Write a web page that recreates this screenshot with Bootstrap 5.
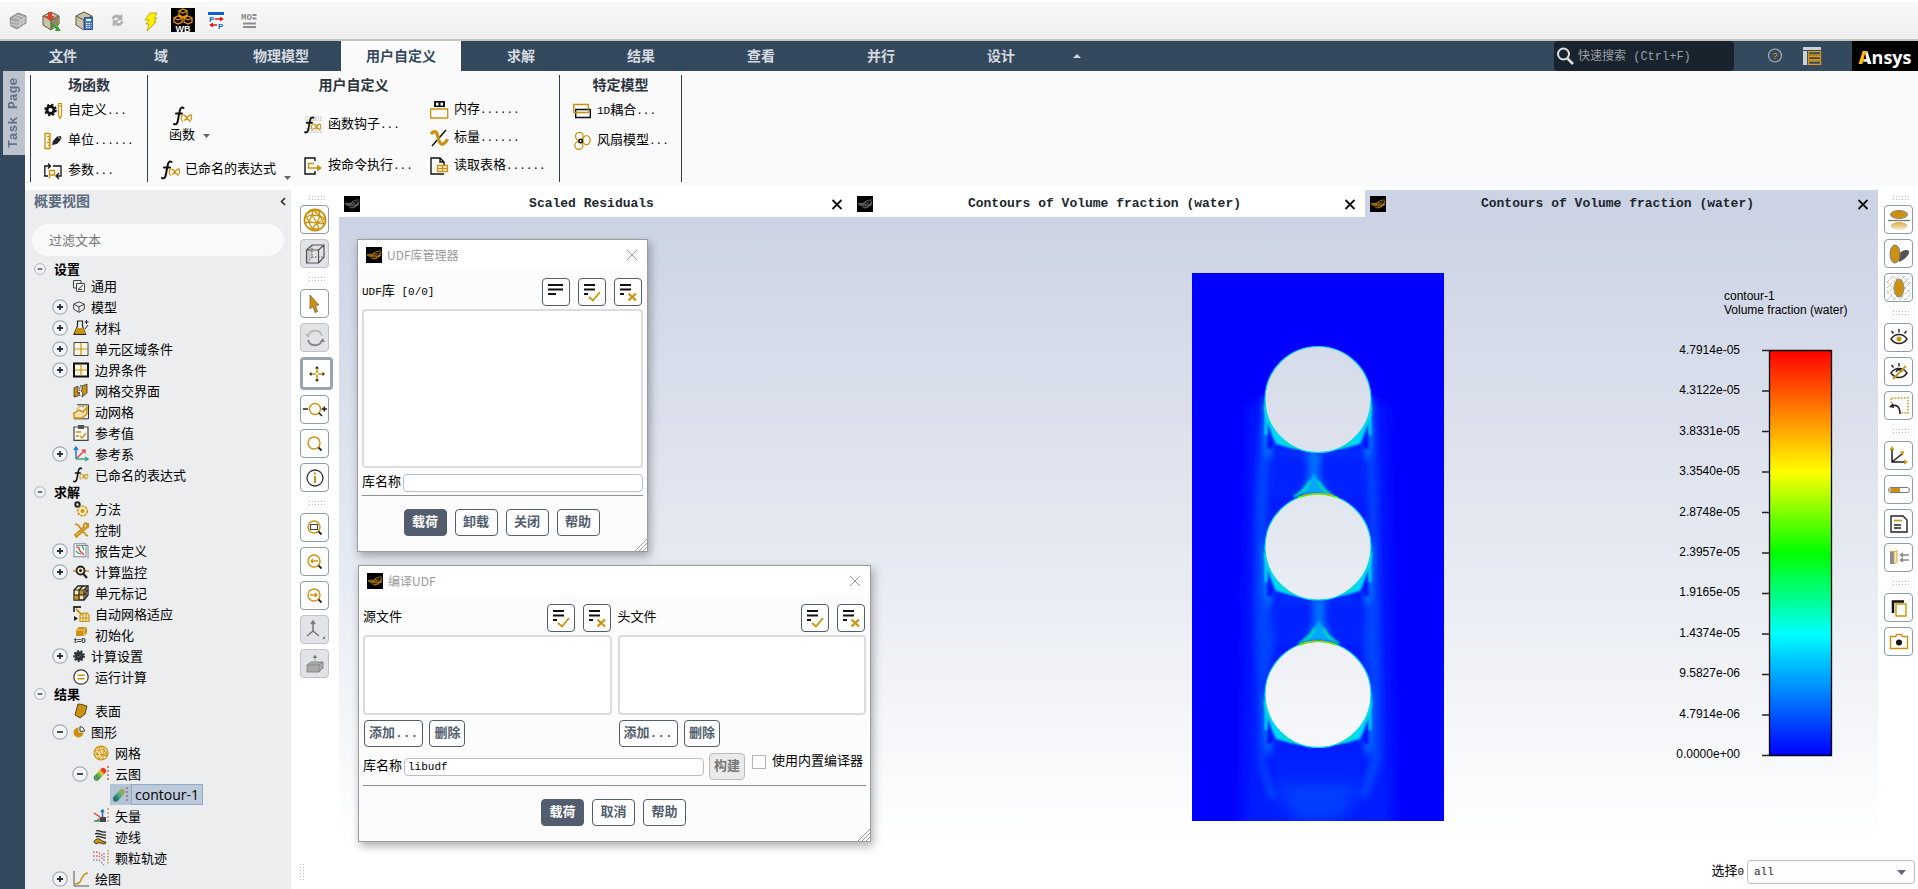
<!DOCTYPE html>
<html lang="zh-CN">
<head>
<meta charset="utf-8">
<meta name="viewport" content="width=device-width, initial-scale=1">
<title>Ansys Fluent</title>
<link href="https://cdn.jsdelivr.net/npm/bootstrap@5.3.0/dist/css/bootstrap.min.css" rel="stylesheet">
<script src="https://cdn.jsdelivr.net/npm/bootstrap@5.3.0/dist/js/bootstrap.bundle.min.js" defer></script>
<style>
:root{--navy:#34495e;--gold:#cc920f;--ink:#101418;--slate:#525e6e}
body{font-family:"Liberation Mono","Noto Sans CJK SC",monospace;font-size:13px;line-height:20px;color:#000;background:#fff;height:100vh;overflow:hidden}
svg{display:block;flex:none;overflow:visible}
a{color:inherit;text-decoration:none}
button{padding:0;border:0;background:none;color:inherit;line-height:20px}
.mn{font-size:11px}
.i12{width:12px;height:12px}.i16{width:16px;height:16px}.i18{width:18px;height:18px}.i20{width:20px;height:20px}.i24{width:24px;height:24px}
.fit-w{min-width:0}.fit-h{min-height:0}
.amber{color:var(--gold)}.dim{color:#777}

.quickbar{height:41px;padding:1px 6px 0;gap:10px;background:linear-gradient(#fff 2px,#f9f9f9 2px,#eee);border-bottom:2px solid #c4c6be}
.quickbar button{width:23px}
.menubar{height:30px;padding-left:25px;background:var(--navy);color:#d5dae0;font-size:14px;font-weight:700}
.menubar .tab{width:120px;text-align:center;height:30px;line-height:32px}
.menubar .first{width:76px}
.menubar .active{background:#fafafa;color:var(--navy)}
.searchbox{width:180px;height:30px;background:#19232d;border-radius:4px;padding-left:2px;margin-right:33px}
.searchbox input{background:none;border:0;outline:0;width:150px;font-size:12px;padding:2px 0 0;color:#ccc}
.searchbox input::placeholder{color:#98a0a8;opacity:1}
.brand{width:66px;height:30px;margin-left:31px;background:#000;font:700 18px/32px "Open Sans",sans-serif;color:#fff;text-align:center}
.brand b{background:linear-gradient(105deg,#ffb71b 52%,#fff 52%);-webkit-background-clip:text;background-clip:text;color:transparent}
.gap20{margin-left:20px}

.rail{width:25px;background:var(--navy);padding-left:3px}
.rail button{width:22px;height:84px;background:#bcc3cc;color:#5f6f86;font-weight:700;writing-mode:vertical-rl;transform:rotate(180deg);text-align:center;line-height:22px}
.ribbon{height:115px;background:#fafafa;padding:4px 0 0 5px}
.ribbon .rule{width:1px;height:107px;background:#2c3e50}
.ribbon h2{font-size:14px;line-height:22px;height:21px;margin:0;font-weight:700;text-align:center;color:#2c3440}
.ribbon button{display:flex;align-items:center;gap:6px;white-space:nowrap}
.g1{width:116px}.g2{width:411px}.g3{width:121px}
.inset{padding-left:13px}
.r30 button{height:30px}.r28 button{height:28px}
.colA{width:143px}.colB{width:126px}
.ribbon .hooks{height:58px}.ribbon .exec{height:24px}.ribbon .expr{height:33px;gap:4px}
.ribbon .func{height:57px;padding-top:10px;gap:0}

.outline{width:266px;background:#ecedef;font-family:"Open Sans","Noto Sans CJK SC",sans-serif}
.outline h1{font-size:14px;line-height:22px;margin:0;font-weight:700;color:#5c6b80}
.outline-head{padding:0 5px 0 9px}
.filter{margin:12px 7px 6px;height:32px;width:252px;border:0;border-radius:16px;background:#f9f9f9;padding:0 17px;outline:0}
.filter::placeholder{color:#777;opacity:1}
.tree{margin:0;padding:0;list-style:none}
.tree li{display:flex;align-items:center;height:21px;padding-left:27px;gap:6px}
.tree li>.tw{margin-right:-1px}
.tree .hd{height:13px;padding-left:9px;gap:8px;font-weight:700}
.tree .l2{padding-left:47px}.tree .l3{padding-left:85px}
.tree .tw{width:16px;height:16px}
.picked{background:#b4c3d5;height:21px;padding-left:2px;gap:3px}
.picked a{border:1px solid #93a8c2;padding:0 3px;line-height:19px;font-size:14px;background:#bccadb}

.tools{width:48px;padding:3px 0 0 9px;gap:5px}
.tools-r{width:40px;padding-left:6px}
.tools button{width:29px;height:29px;border:1px solid #8d9cab;border-radius:4px;background:#fff;display:flex;align-items:center;justify-content:center}
.tools button:disabled{background:#e2e3e6;border-color:#bfc2c6}
.tools .on{width:33px;height:33px;border:3px solid #97a4b1}
.grip{width:17px;height:5px;margin:3px 0 3px 8px;background:radial-gradient(circle,#bbb 1px,transparent 1px) 0 0/3px 3px}
.tools .grip:first-child{margin:2px 0 0 8px}
.grip-v{width:6px;height:18px;background:radial-gradient(circle,#bbb 1px,transparent 1px) 0 0/3px 3px}
.views a{height:27px;flex:1 1 0;display:flex;align-items:center;padding:0 9px 0 5px;font-weight:700;color:#20262e;background:#fff}
.views span{flex:1;text-align:center;padding-right:8px}
.views .active{background:#ccd3e4}
.scene{background:linear-gradient(#ccd3e4,#e5e9f1 52%,#fff 98%)}
.plot{padding:56px 0 0;margin-right:27px}
.field{width:253px;height:548px;margin-right:279px}
.legend{width:127px;font:12px/14px "Liberation Sans",sans-serif;padding-top:16px}
.legend p{margin:0;white-space:nowrap}
.colormap{margin:26px 0 0 -50px}
.legend ol{list-style:none;margin:0;padding:0;height:418px;width:66px;text-align:right}
.ramp{margin:7px 0 0 22px}
.win{position:absolute;background:#fcfcfc;border:1px solid #9b9b9f;box-shadow:2px 4px 9px rgba(0,0,0,.32)}
.udflib{left:18px;top:22px;width:291px}
.udfbuild{left:19px;top:348px;width:513px}
.win header{height:29px;background:#fff;padding:0 9px 0 8px;gap:5px;font:12px/28px "Noto Sans CJK SC",sans-serif;color:#999}
.win .body{padding:9px 4px 0}
.picks{gap:8px;padding-right:1px;margin-bottom:3px}
.win .lst{width:100%;border:2px solid #dcdcdc;border-radius:4px;background:#fff;display:block;overflow:hidden;padding:0}
.lst.tall{height:159px}.lst.short{height:80px}
.win .sq{width:28px;height:28px;border:1px solid var(--slate);border-radius:4px;background:#fff;display:flex;align-items:center;justify-content:center}
.win .txt{height:18px;border:1px solid #b3bfcc;border-radius:4px;padding:0 3px;outline:0;font-size:11px;background:#fff;min-width:0}
.pair{gap:6px}
.edit{padding:5px 1px 6px}
.named{gap:2px;margin:5px 0 2px}
.build{gap:2px;margin-bottom:5px;padding-right:3px}
.build .cmd{margin:0 5px 0 3px}
.build .opt{gap:6px;height:18px}
.foot{padding:13px 2px 15px 0;gap:8px}
.cmd{height:27px;min-width:43px;border:1px solid var(--slate)!important;border-radius:4px;background:#fff!important;color:var(--slate);font-weight:700;padding:0 4px;line-height:25px}
.cmd.prime{background:var(--slate)!important;color:#fff}
.cmd.slim{min-width:36px}
.cmd:disabled{background:#eaeaea!important;border-color:#bbb!important;color:#777}
.win hr{margin:0;border:0;height:1px;background:#8e8e8e;opacity:1}
.corner{position:absolute;right:0;bottom:0}
.boxed{width:14px;height:14px;margin:0;appearance:none;border:1px solid #b5b5b5;background:#fff}
.status{height:34px;padding:0 3px 0 8px;gap:3px}
.status select{width:168px;height:24px;border:1px solid #b3bcc8;border-radius:4px;padding:0 6px;font-size:11px;line-height:20px;background-color:#fdfdfd;background-size:9px 5px;background-position:right 8px center;background-image:url("data:image/svg+xml,%3Csvg xmlns='http://www.w3.org/2000/svg' viewBox='0 0 9 5'%3E%3Cpath fill='%23667' d='M0 0h9L4.500 5z'/%3E%3C/svg%3E")}
</style>
</head>
<body class="d-flex flex-column">

<svg width="0" height="0" class="position-absolute" aria-hidden="true">
<defs>
<linearGradient id="rain" x1="0" y1="1" x2="1" y2="0"><stop offset=".1" stop-color="#3a6"/><stop offset=".4" stop-color="#7b3"/><stop offset=".7" stop-color="#ec2"/><stop offset="1" stop-color="#e32"/></linearGradient>
<linearGradient id="rain2" x1="0" y1="1" x2="1" y2="0"><stop offset=".1" stop-color="#287"/><stop offset=".5" stop-color="#4a7"/><stop offset=".9" stop-color="#9a6"/></linearGradient>
<linearGradient id="fade" x1="0" y1="0" x2="0" y2="1"><stop offset="0" stop-color="#d9ac45"/><stop offset="1" stop-color="#f6ead0"/></linearGradient>
<linearGradient id="heat" x1="0" y1="0" x2="0" y2="1"><stop offset="0" stop-color="red"/><stop offset=".3" stop-color="#ff0"/><stop offset=".5" stop-color="#0f0"/><stop offset=".7" stop-color="#0ff"/><stop offset="1" stop-color="#00f"/></linearGradient>
<filter id="b1" x="-50%" y="-50%" width="200%" height="200%"><feGaussianBlur stdDeviation="1"/></filter>
<filter id="b3" x="-100%" y="-20%" width="300%" height="140%"><feGaussianBlur stdDeviation="3"/></filter>
<filter id="b6" x="-100%" y="-30%" width="300%" height="160%"><feGaussianBlur stdDeviation="7"/></filter>
</defs>
<symbol id="mark" viewBox="0 0 16 16"><path fill="#000" d="M0 0h16v16H0z"/><g fill="none" stroke="currentColor" stroke-width=".8"><path d="M1 7.500c3 1 5 0 7-1.500s4-2 7-2M1 8c3 2 6 0 8-1.500M3 9.500c4 1 7-1 9-4M5 11c4 1 8-1 9-5M7 12c4 0 7-2 8-7M3 7c3 1 9 4 11 2M8 5.500c2 2 4 4 7 3"/></g></symbol>
<symbol id="minus" viewBox="0 0 16 16"><circle cx="8" cy="8" r="7.200" fill="#f3f4f5" stroke="#a2adb8" stroke-width="1.200"/><path stroke="#222" stroke-width="1.600" d="M5 8h6"/></symbol>
<symbol id="plus" viewBox="0 0 16 16"><circle cx="8" cy="8" r="7.200" fill="#f3f4f5" stroke="#a2adb8" stroke-width="1.200"/><path stroke="#26323e" stroke-width="1.800" d="M5 8h6M8 5v6"/></symbol>
<symbol id="fx" viewBox="0 0 20 20"><g fill="none" stroke-linecap="round"><path stroke="#111" stroke-width="2" d="M10.500 2c-2-1.500-3.500.5-4 4L5 14c-.5 3.500-2 5-4 4M3 7.500h6"/><path stroke="var(--gold)" stroke-width="1.200" d="M10 8.500c-2 2-2 5-.5 7M17.500 8.500c1.800 2 1.500 5-.8 7"/><path stroke="var(--gold)" stroke-width="1.600" d="M11.500 9.500c2-.5 2 5 4.500 4.500M16.500 9.500c-2 0-3 5-5 4.500"/></g></symbol>
<symbol id="fan" viewBox="0 0 20 20"><g fill="none" stroke="var(--gold)" stroke-width="1.400"><ellipse cx="7" cy="4.800" rx="4.200" ry="4.500"/><ellipse cx="15" cy="9" rx="4" ry="5"/><ellipse cx="6.500" cy="15" rx="4.500" ry="4.300"/></g><circle cx="8.500" cy="10" r="2.800" fill="#111"/><circle cx="8.500" cy="10" r="1" fill="#fff"/></symbol>
<symbol id="ball" viewBox="0 0 24 24"><g fill="none" stroke="var(--gold)" stroke-width="1.300"><circle cx="12" cy="12" r="10.500" stroke-width="1.800"/><path d="M2 9l7-2 8 1 5 3M9 7l-3 7 8 1 3-7 4 8-7-1-5 6-3-7-4 1M9 7l5 8 7 1M9 7l1-5 7 6-1-5M6 14L3 8M14 15l2 6M9 21l7 0M22 11l-8 4M4 6l6-4 6 1"/></g></symbol>
<symbol id="lens" viewBox="0 0 20 20"><circle cx="9" cy="9" r="6" fill="none" stroke="var(--gold)" stroke-width="1.400"/><path stroke="#222" stroke-width="1.800" d="M13.500 13.500l3 3"/></symbol>
<symbol id="lines3" viewBox="0 0 20 20"><path stroke="#111" stroke-width="1.800" d="M2 3h15M2 7.500h15M2 12h8"/></symbol>
<symbol id="linesok" viewBox="0 0 20 20"><path stroke="#111" stroke-width="1.800" d="M2 3h11M2 7.500h11M2 12h4"/><path fill="none" stroke="var(--gold)" stroke-width="1.800" d="M7 15l4 3.500L18 10"/></symbol>
<symbol id="linesno" viewBox="0 0 20 20"><path stroke="#111" stroke-width="1.800" d="M2 3h11M2 7.500h11M2 12h4"/><path stroke="var(--gold)" stroke-width="2.200" d="M10.500 11.500l7.500 7M18 11.500l-7.500 7"/></symbol>
<symbol id="cross" viewBox="0 0 12 12"><path stroke="currentColor" d="M1 1l10 10M11 1L1 11"/></symbol>
<symbol id="cross2" viewBox="0 0 12 12"><path stroke="#111" stroke-width="1.800" d="M1.500 2l9 9M10.500 2l-9 9"/></symbol>
<symbol id="rocks" viewBox="0 0 24 24"><path fill="#c9c4b0" stroke="#5c5738" d="M4 8l8-4 8 4v8l-8 6-8-5z"/><path fill="#8f8a68" d="M12 12l8-4v8l-8 6z"/><path fill="none" stroke="#5c5738" d="M4 8l8 4 8-4M12 12v10"/></symbol>
</svg>

<div class="quickbar d-flex align-items-center" role="toolbar">
<button aria-label="几何"><svg class="i24" viewBox="0 0 24 24"><path fill="#a9a9a9" stroke="#888" d="M4 10l8-5 8 3v7l-9 6-6-3z"/><path fill="none" stroke="#dcdcdc" stroke-width=".8" d="M5 13l6 2 9-5M5 16l6 2 9-5M8 9l6 2v8M11 7l6 2v8"/></svg></button>
<button aria-label="读取"><svg class="i24" viewBox="0 0 24 24"><use href="#rocks" width="24" height="24"/><path fill="#d8432b" d="M9 4h4v4h3l-5 5-5-5h3z"/><path fill="#3aa02c" d="M13 15l5 4v-2l4 6h-6l1-2-5-4z"/></svg></button>
<button aria-label="计算器"><svg class="i24" viewBox="0 0 24 24"><use href="#rocks" width="24" height="24"/><path fill="#4a7ac4" stroke="#264f94" d="M12.500 9.500h8v12h-8z"/><path fill="#dfe" d="M14 11h5v2h-5z"/><path stroke="#fff" stroke-dasharray="1.500 1" d="M14 15.500h5.500M14 17.500h5.500M14 19.500h5.500"/></svg></button>
<button aria-label="刷新"><svg class="i24" viewBox="0 0 24 24"><path fill="#b0b0b0" stroke="#a0a0a0" stroke-width=".5" d="M7 11c0-4 6-5 8-3l2-1.500V12h-5l1.500-2c-2-1.500-4-1-4.500 1zM18 13.500c0 4-6 5-8 3L8 18v-5.500h5L11.500 14.500c2 1.500 4 1 4.500-1z"/></svg></button>
<button aria-label="运行"><svg class="i24" viewBox="0 0 24 24"><path fill="#fff200" stroke="#b79b00" stroke-width=".8" d="M12 5h7l-3 5h3l-3 4h2l-9 9 2-7H8l3-4H7z"/></svg></button>
<button aria-label="Workbench"><svg class="i24" viewBox="0 0 24 24"><path d="M0 0h24v24H0z"/><g fill="none" stroke="#e8940e" stroke-width="1.300"><path d="M12 1l4 2v4l-4 2-4-2V3zM7 8l4 2v4l-4 2-4-2v-4zM17 8l4 2v4l-4 2-4-2v-4zM8 3l4 2 4-2M3 10l4 2 4-2M13 10l4 2 4-2"/></g><text x="12" y="23.500" text-anchor="middle" font-family="Liberation Sans" font-weight="700" font-size="9" fill="#fff">WB</text></svg></button>
<button aria-label="参数"><svg class="i24" viewBox="0 0 24 24"><path fill="#fff" d="M4 4h16v17H4z"/><path fill="#0a62d0" d="M4 4h16v3H4z"/><path stroke="#e11" stroke-width="1.400" d="M11 11h6M8 17h5"/><path fill="#e11" d="M16 8.500l4 2.500-4 2.500zM9 14.500L5 17l4 2.500z"/><text x="5" y="14" font-family="Liberation Sans" font-weight="700" font-size="8" fill="#0a62d0">P</text><text x="14" y="20.500" font-family="Liberation Sans" font-weight="700" font-size="8" fill="#0a62d0">P</text></svg></button>
<button aria-label="监控"><svg class="i24" viewBox="0 0 24 24"><path stroke="#8c8c8c" stroke-width="2" d="M6 15.500h13M6 19h13M15.500 7h4M15.500 10.500h4"/><text x="4" y="12" font-family="Liberation Mono" font-weight="700" font-size="9" fill="#8c8c8c">MO</text></svg></button>
</div>

<nav class="menubar d-flex align-items-center">
<a href="#" class="tab first"><u>文</u>件</a><a href="#" class="tab">域</a><a href="#" class="tab">物理模型</a><a href="#" class="tab active">用户自定义</a><a href="#" class="tab">求解</a><a href="#" class="tab">结果</a><a href="#" class="tab">查看</a><a href="#" class="tab">并行</a><a href="#" class="tab">设计</a>
<button class="ms-2 ps-1" aria-label="折叠"><svg width="8" height="4"><path fill="#d5dae0" d="M4 0l4 4H0z"/></svg></button>
<label class="searchbox d-flex align-items-center gap-1 ms-auto"><svg class="i18" viewBox="0 0 18 18"><circle cx="7.500" cy="7" r="5.500" fill="none" stroke="#dde1e6" stroke-width="2"/><path stroke="#dde1e6" stroke-width="2.500" d="M11.500 11.500l5.500 5.500"/></svg><input placeholder="快速搜索 (Ctrl+F)" aria-label="快速搜索"></label>
<button aria-label="帮助"><svg class="i16" viewBox="0 0 16 16"><circle cx="8" cy="7.500" r="6.500" fill="none" stroke="#a9b2bc" stroke-width="1.200"/><text x="8" y="11" text-anchor="middle" font-size="9" fill="#e09a15">?</text></svg></button>
<button class="gap20" aria-label="布局"><svg class="i18" viewBox="0 0 18 18"><path fill="#ccd2d9" d="M0 0h18v3H0zM0 4h4v14H0z"/><path fill="none" stroke="#e09a15" stroke-width="1.300" d="M5.500 4.700H17.500v3.200H5.500zM5.500 9.500H17.500v3.200H5.500zM5.500 14.200H17.500v3.200H5.500z"/></svg></button>
<span class="brand"><b>A</b>nsys</span>
</nav>

<div class="d-flex flex-grow-1 fit-h">
<div class="rail"><button>Task Page</button></div>
<div class="d-flex flex-column flex-grow-1 fit-w">

<section class="ribbon d-flex">
<div class="rule"></div>
<div class="g1 r30"><h2>场函数</h2><div class="inset">
<button><svg class="i18" viewBox="0 0 18 18"><circle cx="6.500" cy="8" r="3.500" fill="none" stroke="#111" stroke-width="2.800"/><circle cx="6.500" cy="8" r="5.400" fill="none" stroke="#111" stroke-width="1.800" stroke-dasharray="2.240 2"/><path fill="none" stroke="var(--gold)" stroke-width="1.200" d="M14.500 1.500h3v12l-1.500 3-1.500-3zM14.500 4h3"/></svg><span>自定义<span class="mn">...</span></span></button>
<button><svg class="i18" viewBox="0 0 18 18"><path fill="none" stroke="var(--gold)" stroke-width="1.400" d="M1 1.500h5v15H1zM3 4.500h3M4 7.500h2M3 10.500h3M4 13.500h2"/><path fill="#222" d="M8 13l1-4 4-4.500L17 4l.5 3-4.500 5z"/><path stroke="#fff" stroke-width=".8" d="M14 4.500l3 3"/></svg><span>单位<span class="mn">......</span></span></button>
<button><svg class="i18" viewBox="0 0 18 18"><path fill="none" stroke="#111" stroke-width="1.300" d="M4 14H.8V4H6M4 1.500L6.500 4 4 6.500M9 4h8v10h-4M15 11l-3 3 3 3"/><path fill="none" stroke="var(--gold)" stroke-width="1.400" d="M5.500 16.500v-8h5v4.500h-5"/></svg><span>参数<span class="mn">...</span></span></button>
</div></div>
<div class="rule"></div>
<div class="g2"><h2>用户自定义</h2><div class="d-flex inset">
<div class="colA">
<button class="func flex-column align-items-start ps-2"><svg class="i20 ms-1"><use href="#fx"/></svg><span class="d-flex align-items-center pe-1 gap-2">函数<svg width="7" height="4"><path fill="#666" d="M0 0h7L3.500 4z"/></svg></span></button>
<button class="expr"><svg class="i20"><use href="#fx"/></svg>已命名的表达式<svg class="ms-1 mt-3" width="7" height="4"><path fill="#666" d="M0 0h7L3.500 4z"/></svg></button>
</div>
<div class="colB">
<button class="hooks"><svg class="i18" viewBox="0 0 20 20"><text font-size="7" fill="#bbb" font-family="Liberation Sans"><tspan x="1" y="6">01001</tspan><tspan x="1" y="19">10101</tspan></text><use href="#fx" width="20" height="20"/></svg><span>函数钩子<span class="mn">...</span></span></button>
<button class="exec"><svg class="i18" viewBox="0 0 18 18"><path fill="none" stroke="#111" stroke-width="1.400" d="M11 4V1H1v16h10v-3"/><path fill="none" stroke="var(--gold)" stroke-width="1.400" d="M10 6.500H4.500V11H14"/><path fill="var(--gold)" d="M13 7.500l5 3.500-5 3.500z"/></svg><span>按命令执行<span class="mn">...</span></span></button>
</div>
<div class="r28">
<button><svg class="i18" viewBox="0 0 18 18"><path fill="#111" d="M4 0h11v6H4z"/><path fill="#fff" d="M6 1.800h2.500v2.700H6zM10.500 1.800H13v2.700h-2.500z"/><path fill="none" stroke="var(--gold)" stroke-width="1.300" d="M.7 8h17v9H.7z"/></svg><span>内存<span class="mn">......</span></span></button>
<button><svg class="i18" viewBox="0 0 18 18"><path stroke="#111" stroke-width="1.500" d="M16 1L2 17"/><path fill="none" stroke="var(--gold)" stroke-width="3.200" d="M1 5c3-4 6-3 7 3s3 8 5 7 4-3 4-5"/></svg><span>标量<span class="mn">......</span></span></button>
<button><svg class="i18" viewBox="0 0 18 18"><path fill="none" stroke="#111" stroke-width="1.400" d="M14 8V5l-4-4H1v16h13M10 1v4h4"/><path fill="#fafafa" stroke="var(--gold)" stroke-width="1.300" d="M7.500 8.500h10v6h-10zM7.500 11.500h10M12.500 8.500v6"/></svg><span>读取表格<span class="mn">......</span></span></button>
</div></div></div>
<div class="rule"></div>
<div class="g3 r30"><h2>特定模型</h2><div class="inset">
<button><svg class="i18" viewBox="0 0 18 18"><path fill="none" stroke="#111" stroke-width="1.400" d="M2.700 7.500H17.300v8H2.700z"/><path fill="none" stroke="var(--gold)" stroke-width="1.400" d="M15.300 7.500v-5H.7v8h14.600v-1.500"/></svg><span><span class="mn">1D</span>耦合<span class="mn">...</span></span></button>
<button><svg class="i18"><use href="#fan"/></svg><span>风扇模型<span class="mn">...</span></span></button>
</div></div>
<div class="rule"></div>
</section>

<div class="d-flex flex-grow-1 fit-h pt-1">
<aside class="outline">
<div class="outline-head d-flex align-items-center justify-content-between"><h1>概要视图</h1><button aria-label="收起"><svg width="6" height="9"><path fill="none" stroke="#222" stroke-width="1.500" d="M5 1L1.500 4.500 5 8"/></svg></button></div>
<input class="filter" placeholder="过滤文本" aria-label="过滤文本">
<ul class="tree">
<li class="hd"><svg class="i12"><use href="#minus"/></svg><a href="#">设置</a></li>
<li><span class="tw"></span><svg class="i12" viewBox="0 0 12 12"><path fill="none" stroke="#444" d="M8 3V.5H.5V8H3M3.500 3.500h8v8h-8zM10 5L5 9.500h4"/></svg><a href="#">通用</a></li>
<li><button class="tw" aria-label="展开"><svg class="i16"><use href="#plus"/></svg></button><svg class="i12" viewBox="0 0 12 12"><path fill="none" stroke="#444" d="M6 .8l5.300 2.400v5L6 11.300.7 8.200v-5zM.7 3.200L6 5.800l5.300-2.600M6 5.800v5.500"/></svg><a href="#">模型</a></li>
<li><button class="tw" aria-label="展开"><svg class="i16"><use href="#plus"/></svg></button><svg class="i16" viewBox="0 0 16 16"><path fill="#eee" stroke="#222" stroke-width="1.200" d="M4.500 1h5v5l3 8.500H1L4.500 6z"/><path fill="var(--gold)" d="M3.500 8h7l2 6H1.500z"/><path stroke="#222" d="M12 9l3-4M13.500 0v4M11.500 2h4"/></svg><a href="#">材料</a></li>
<li><button class="tw" aria-label="展开"><svg class="i16"><use href="#plus"/></svg></button><svg class="i16" viewBox="0 0 16 16"><path fill="#fbf5e6" stroke="#444" d="M1 1.500h14v13H1z"/><path stroke="var(--gold)" stroke-width="1.200" d="M1.500 8h13M8 2v12"/></svg><a href="#">单元区域条件</a></li>
<li><button class="tw" aria-label="展开"><svg class="i16"><use href="#plus"/></svg></button><svg class="i16" viewBox="0 0 16 16"><path fill="#fbf5e6" stroke="#111" stroke-width="2" d="M1 1.500h14v13H1z"/><path stroke="var(--gold)" stroke-width="1.200" d="M2 8h12M8 2.500v11"/></svg><a href="#">边界条件</a></li>
<li><span class="tw"></span><svg class="i16" viewBox="0 0 16 16"><path fill="var(--gold)" stroke="#333" stroke-width=".8" d="M1 5l4-2v3l-1 3 2 1-1 3-4 1zM9 3l5-2v9l-5 4 1-4-2-2 1-2z"/><path fill="none" stroke="#222" stroke-dasharray="1.500 1" d="M8 2L6 7l1 7"/></svg><a href="#">网格交界面</a></li>
<li><span class="tw"></span><svg class="i16" viewBox="0 0 16 16"><path fill="none" stroke="#333" d="M4 .8h11.500v14H1"/><path fill="#f5dfae" stroke="var(--gold)" stroke-width="1.400" d="M1 9c2 0 3-3 5-3l4 2 4-5v7l-5 4H1z"/><path fill="none" stroke="var(--gold)" d="M4 5c2-3 5-3 7-2l-1-2"/></svg><a href="#">动网格</a></li>
<li><span class="tw"></span><svg class="i16" viewBox="0 0 16 16"><path fill="#f7f7f7" stroke="#444" stroke-width="1.200" d="M1 2h14v13.300H1z"/><path fill="#555" d="M5 0h6v4H5z"/><path fill="none" stroke="var(--gold)" stroke-width="1.400" d="M3 7h5M3 11h3M7 11l2 2 4-5"/></svg><a href="#">参考值</a></li>
<li><button class="tw" aria-label="展开"><svg class="i16"><use href="#plus"/></svg></button><svg class="i16" viewBox="0 0 16 16"><path fill="none" stroke="#2a7fc0" stroke-width="1.500" d="M3 13V2M1 4l2-3 2 3"/><path fill="none" stroke="#e33" stroke-width="1.200" d="M4 12l8-8M8.500 4H12v3.500"/><path fill="none" stroke="#3a8" stroke-width="1.500" d="M3 13h11M12 11l3 2-3 2"/></svg><a href="#">参考系</a></li>
<li><span class="tw"></span><svg class="i16"><use href="#fx"/></svg><a href="#">已命名的表达式</a></li>
<li class="hd"><svg class="i12"><use href="#minus"/></svg><a href="#">求解</a></li>
<li><span class="tw"></span><svg class="i16" viewBox="0 0 16 16"><circle cx="4.500" cy="3.500" r="2.200" fill="none" stroke="#222" stroke-width="2"/><circle cx="9.500" cy="10" r="4.800" fill="#faeccb" stroke="var(--gold)" stroke-width="1.600" stroke-dasharray="2.500 1"/><circle cx="9.500" cy="10" r="2" fill="var(--gold)"/></svg><a href="#">方法</a></li>
<li><span class="tw"></span><svg class="i16" viewBox="0 0 16 16"><path fill="none" stroke="var(--gold)" stroke-width="1.800" d="M2 2l3 1 8 10 2 1M14 1c-3 0-4 2-3 4l-9 8 1.500 2L13 6c2 0 3-2 2-4l-2 2"/></svg><a href="#">控制</a></li>
<li><button class="tw" aria-label="展开"><svg class="i16"><use href="#plus"/></svg></button><svg class="i16" viewBox="0 0 16 16"><path fill="#f5f8fa" stroke="#7a8794" d="M3 2.500h12v13M1 .8h12v13H1z"/><path fill="none" stroke="#e33" stroke-width="1.300" d="M3 4l3 1 1 3 4 4"/><path fill="none" stroke="#2a5" stroke-width="1.300" d="M3 8l2 2 3 1M9 3l2 4"/></svg><a href="#">报告定义</a></li>
<li><button class="tw" aria-label="展开"><svg class="i16"><use href="#plus"/></svg></button><svg class="i16" viewBox="0 0 16 16"><path stroke="var(--gold)" stroke-width="1.500" d="M0 7h3M12 7h4"/><circle cx="7.500" cy="6.500" r="4" fill="#f5e7c4" stroke="#222" stroke-width="1.800"/><circle cx="7.500" cy="6.500" r="1.500" fill="#222"/><path stroke="#222" stroke-width="2.200" d="M10 9.500l4 4.500"/></svg><a href="#">计算监控</a></li>
<li><span class="tw"></span><svg class="i16" viewBox="0 0 16 16"><path fill="#f4e2b8" stroke="#222" stroke-width="1.300" d="M1 5l4-4h10v9l-4 5H1z"/><path fill="var(--gold)" d="M1.500 10H6v4.500H1.500zM6 5.500h4.500V10H6z"/><path fill="none" stroke="#222" stroke-width="1.200" d="M1 5h10v10M11 5l4-4M1 10h10l4-5M6 5v10M6 5l4-4M13 3v9"/></svg><a href="#">单元标记</a></li>
<li><span class="tw"></span><svg class="i16" viewBox="0 0 16 16"><path fill="none" stroke="#333" stroke-width="1.800" d="M1 6V1h7"/><path stroke="var(--gold)" stroke-width="1.800" d="M3 3l6 6"/><path fill="#222" d="M1 10l4 2.500L1 15z"/><path fill="#fbeecb" stroke="var(--gold)" stroke-width="1.200" d="M7 9l3-2h4l2 2v6.500H7zM7 12h9M10 7v8.500M13 7v8.500"/></svg><a href="#">自动网格适应</a></li>
<li><span class="tw"></span><svg class="i16" viewBox="0 0 16 16"><path fill="var(--gold)" d="M3 3l3-3h8v6l-3 3H3z"/><path fill="none" stroke="#f4dfa8" stroke-width=".8" d="M3 3h8v6M11 3l3-3"/><text x="1" y="15.500" font-family="Liberation Sans" font-weight="700" font-size="8" fill="#333">t=0</text></svg><a href="#">初始化</a></li>
<li><button class="tw" aria-label="展开"><svg class="i16"><use href="#plus"/></svg></button><svg class="i12" viewBox="0 0 12 12"><circle cx="6" cy="6" r="4.500" fill="#2b3238"/><circle cx="6" cy="6" r="5" fill="none" stroke="#2b3238" stroke-width="1.800" stroke-dasharray="2 1.500"/><path fill="none" stroke="#6b7680" d="M4 6l1.500 1.500L8 4.500"/></svg><a href="#">计算设置</a></li>
<li><span class="tw"></span><svg class="i16" viewBox="0 0 16 16"><circle cx="8" cy="8" r="7.200" fill="#fff" stroke="#333" stroke-width="1.200"/><path stroke="var(--gold)" stroke-width="1.600" d="M4.500 6.300h7M4.500 9.700h7"/></svg><a href="#">运行计算</a></li>
<li class="hd"><svg class="i12"><use href="#minus"/></svg><a href="#">结果</a></li>
<li><span class="tw"></span><svg class="i16" viewBox="0 0 16 16"><path fill="var(--gold)" stroke="#5a4a20" d="M5 1l4 .5 5 1.500-2 8-5 4-5-3z"/></svg><a href="#">表面</a></li>
<li><button class="tw" aria-label="折叠"><svg class="i16"><use href="#minus"/></svg></button><svg class="i12" viewBox="0 0 12 12"><path fill="var(--gold)" d="M5.500 1.500v5h5a5 5 0 1 1-5-5z"/><path fill="#fff" stroke="#333" d="M7 .7v4.500h4.500A4.500 4.500 0 0 0 7 .7z"/></svg><a href="#">图形</a></li>
<li class="l2"><span class="tw"></span><svg class="i16"><circle cx="8" cy="8" r="7" fill="#f7e6bd"/><use href="#ball"/></svg><a href="#">网格</a></li>
<li class="l2"><button class="tw" aria-label="折叠"><svg class="i16"><use href="#minus"/></svg></button><svg class="i16" viewBox="0 0 16 16"><path stroke="url(#rain)" stroke-width="6" stroke-linecap="round" d="M4 11.500L10 5"/><circle cx="3.500" cy="12" r="2.500" fill="#5c9a5a" stroke="#476" stroke-width=".5"/><path stroke="#c43" stroke-width="1.300" stroke-dasharray="2 2" d="M15 0v15"/></svg><a href="#">云图</a></li>
<li class="l3"><span class="picked d-flex align-items-center"><svg class="i16" viewBox="0 0 16 16"><path stroke="url(#rain2)" stroke-width="6" stroke-linecap="round" d="M4 11.500L10 5"/><circle cx="3.500" cy="12" r="2.500" fill="#27766c"/><path stroke="#867" stroke-width="1.300" stroke-dasharray="2 2" d="M15 0v15"/></svg><a href="#">contour-1</a></span></li>
<li class="l2"><span class="tw"></span><svg class="i16" viewBox="0 0 16 16"><path fill="none" stroke="#d33" stroke-width="1.300" d="M1 5l6 4M8 10l-5 3"/><path fill="none" stroke="#2a5" stroke-width="1.500" d="M1 13h8"/><path fill="none" stroke="#27a" stroke-width="1.500" d="M9.500 12V2M8 4l1.500-2L11 4"/><path fill="#444" d="M7 9h6v5H7z"/><path stroke="#c84" stroke-width="1.300" stroke-dasharray="2 2" d="M15 0v15"/></svg><a href="#">矢量</a></li>
<li class="l2"><span class="tw"></span><svg class="i16" viewBox="0 0 16 16"><path fill="none" stroke="#222" stroke-width="1.300" d="M3 2c3-2 4 2 10 1M2 5c4-2 6 2 11 1M3 8c3-2 6 1 10 1"/><path fill="var(--gold)" stroke="#222" stroke-width=".8" d="M1 13c1-4 6-4 8-1l4 1-1 2c-4 0-6-2-7-1s-3 1-4-1z"/></svg><a href="#">迹线</a></li>
<li class="l2"><span class="tw"></span><svg class="i16" viewBox="0 0 16 16"><g fill="none" stroke-width="1.500" stroke-dasharray="1.500 1.500"><path stroke="#d66" d="M0 2h5l5 4M0 6h6l4 3"/><path stroke="#88a" d="M0 10h6l5 5M11 3v9"/><path stroke="#c84" d="M15 0v15"/></g></svg><a href="#">颗粒轨迹</a></li>
<li><button class="tw" aria-label="展开"><svg class="i16"><use href="#plus"/></svg></button><svg class="i16" viewBox="0 0 16 16"><path fill="none" stroke="#555" d="M1 0v15h15"/><path fill="none" stroke="var(--gold)" stroke-width="1.500" d="M2 13c9 0 4-10 13-11"/></svg><a href="#">绘图</a></li>
</ul>
</aside>

<div class="d-flex flex-column flex-grow-1 fit-w">
<div class="d-flex flex-grow-1 fit-h">
<div class="tools d-flex flex-column" role="toolbar">
<div class="grip"></div>
<button aria-label="网格显示"><svg class="i24"><use href="#ball"/></svg></button>
<button disabled aria-label="立方体"><svg class="i20" viewBox="0 0 20 20"><path fill="#c8c8c8" d="M1 6l6-5v12l-6 6z"/><path fill="none" stroke="#555" stroke-width="1.200" d="M1.500 6v13h12V6zM1.500 6l5.500-5h12v12l-5.500 6M13.500 6L19 1"/><path fill="none" stroke="#555" stroke-dasharray="1.500 1.500" d="M7 1v12h12M7 13l-5 6"/></svg></button>
<div class="grip"></div>
<button aria-label="选择"><svg class="i20" viewBox="0 0 20 20"><path fill="var(--gold)" stroke="#7a6a40" stroke-width=".8" d="M5 1l9 10-3.500.5 2 6-2.500 1-2-6L5 15z"/></svg></button>
<button disabled aria-label="旋转"><svg class="i20" viewBox="0 0 20 20"><path fill="none" stroke="#bbb" stroke-width="1.800" d="M3 8c2-7 12-7 14 0"/><path fill="#bbb" d="M0 6h5l-2 4z"/><path fill="none" stroke="#888" stroke-width="1.800" d="M17 12c-2 7-12 7-14 0"/><path fill="#888" d="M15 14h5l-2-4z"/></svg></button>
<button class="on" aria-label="平移"><svg class="i20" viewBox="0 0 20 20"><path stroke="var(--gold)" stroke-width="1.600" d="M10 4v5M10 11v5M4 10h5M11 10h5"/><path fill="#222" d="M8 4.500L10 2l2 2.500zM8 15.500L10 18l2-2.500zM4.500 8L2 10l2.500 2zM15.500 8L18 10l-2.500 2z"/></svg></button>
<button aria-label="缩放"><svg class="i24" viewBox="0 0 24 24"><circle cx="12" cy="11" r="5.500" fill="none" stroke="var(--gold)" stroke-width="1.400"/><path stroke="#222" stroke-width="1.600" d="M16 15l3 3M0 11h5M18.500 11H24M21.300 8.500v5"/></svg></button>
<button aria-label="放大镜"><svg class="i20"><use href="#lens"/></svg></button>
<button aria-label="信息"><svg class="i20" viewBox="0 0 20 20"><circle cx="10" cy="10" r="8" fill="none" stroke="#333" stroke-width="1.300"/><path stroke="var(--gold)" stroke-width="2" d="M10 4.500v2M10 8v7"/></svg></button>
<div class="grip"></div>
<button aria-label="适合窗口"><svg class="i20" viewBox="0 0 20 20"><use href="#lens" width="20" height="20"/><path fill="none" stroke="#444" stroke-width="1.200" d="M5.500 6.500h7v5h-7z"/></svg></button>
<button aria-label="上一视图"><svg class="i20" viewBox="0 0 20 20"><use href="#lens" width="20" height="20"/><path fill="none" stroke="var(--gold)" stroke-width="1.300" d="M13 9H6M8 7L6 9l2 2"/></svg></button>
<button aria-label="下一视图"><svg class="i20" viewBox="0 0 20 20"><use href="#lens" width="20" height="20"/><path fill="none" stroke="var(--gold)" stroke-width="1.300" d="M5 9h7M10 7l2 2-2 2"/></svg></button>
<button disabled aria-label="坐标轴"><svg class="i20" viewBox="0 0 20 20"><path fill="none" stroke="#777" stroke-width="1.500" d="M8 2v9M8 11l-6 5M8 11l6 5M6 4l2-3 2 3"/><path fill="#777" d="M20 16v3h-3z"/></svg></button>
<button disabled aria-label="投影"><svg class="i20" viewBox="0 0 20 20"><path fill="#aaa" stroke="#888" d="M2 11l4-3h12v6l-4 4H2z"/><path fill="none" stroke="#888" d="M2 11h12v7M14 11l4-3"/><path stroke="#aaa" d="M10 9V2M8 4l2-3 2 3"/></svg></button>
</div>

<main class="d-flex flex-column flex-grow-1 fit-w">
<nav class="views d-flex">
<a href="#"><svg class="i16 dim"><use href="#mark"/></svg><span>Scaled Residuals</span><svg class="i12"><use href="#cross2"/></svg></a>
<a href="#"><svg class="i16 dim"><use href="#mark"/></svg><span>Contours of Volume fraction (water)</span><svg class="i12"><use href="#cross2"/></svg></a>
<a href="#" class="active"><svg class="i16 amber"><use href="#mark"/></svg><span>Contours of Volume fraction (water)</span><svg class="i12"><use href="#cross2"/></svg></a>
</nav>
<div class="scene flex-grow-1 position-relative">
<div class="plot d-flex justify-content-end align-items-start">
<svg class="field" viewBox="0 0 253 548" role="img" aria-label="Volume fraction contour">
<defs>
<clipPath id="box"><path d="M0 0h252v548H0z"/></clipPath>
<linearGradient id="backdrop" gradientUnits="userSpaceOnUse" x1="0" y1="-56" x2="0" y2="583"><stop stop-color="#ccd3e4"/><stop offset=".52" stop-color="#e5e9f1"/><stop offset=".98" stop-color="#fff"/></linearGradient>
<g id="skirt"><path fill="#00a0ff" filter="url(#b3)" opacity=".75" d="M71 0h5l5 40-3 26-5-12zM181 0h-5l-5 40 3 26 5-12z"/>
<path fill="#00d8ff" filter="url(#b1)" d="M73 4c1 18 4 31 11 43l14 4 12 1C94 45 80 26 74 0zM179 4c-1 18-4 31-11 43l-14 4-12 1c16-7 30-26 36-52z"/>
<path fill="#0018ff" filter="url(#b1)" d="M76 28l6 18-2 6-5 0zM176 28l-6 18 2 6 5 0z"/>
<path fill="none" stroke="#00f060" stroke-width="2.400" filter="url(#b1)" d="M73 8c1 10 3 14 6 20M90 42c5 5 10 7 16 9M179 8c-1 10-3 14-6 20M162 42c-5 5-10 7-16 9"/>
<path stroke="#00e8ff" stroke-width="2.500" filter="url(#b1)" d="M74 10v28M178 10v28"/></g>
<g id="crest"><path fill="#0090ff" filter="url(#b3)" opacity=".7" d="M-6-42H6l0 22 8 20h-28l8-20z"/><path fill="#00a8ff" filter="url(#b1)" d="M0-22l5 9 12 14c-12-4-22-4-34 0L-5-13z"/><path fill="none" stroke="#00e8a0" stroke-width="2.200" filter="url(#b1)" d="M-20 2l11-8 5-8M20 2L9-6 4-14"/></g>
</defs>
<path fill="#00f" d="M0 0h252v548H0z"/>
<g clip-path="url(#box)">
<g filter="url(#b6)"><path fill="#001aff" d="M58 130h136l8 440H50z"/><path fill="#0024ff" d="M80 180h92v44H80zM82 328h88v44H82zM84 480h84v60H84z"/></g>
<g filter="url(#b3)" opacity=".8" fill="#0050ff"><path d="M70 150h8l-1 55-3 60 3 60 6 45-12 50 2 70 12 34-8 4-10-40-1-66-3-100 1-100zM182 150h-8l1 55 3 60-3 60-4 45 8 50-2 70-10 34 8 4 14-40v-66l-2-100-2-100z"/></g>
<path fill="#0050ff" opacity=".7" filter="url(#b3)" d="M86 177h80v3h-32l-8 8h-10l-8-8H86zM88 325h76v3h-30l-8 8-8-8H88z"/>
<g filter="url(#b6)" fill="#003cff"><path d="M84 510h84l-20 38h-44z"/></g>
<use href="#skirt" y="124"/><use href="#skirt" y="271"/><use href="#skirt" y="419"/>
<use href="#crest" x="122" y="222"/><use href="#crest" x="127" y="369"/>
</g>
<g fill="url(#backdrop)" stroke="#00d8f0" stroke-width="1.200"><circle cx="126" cy="126.500" r="53"/><circle cx="126" cy="274" r="53"/><circle cx="126" cy="421.500" r="53"/></g>
<path fill="none" stroke="#4f0" stroke-width="1.600" d="M106 224.500Q126 217 146 224.500M107 372Q126 364.500 145 372"/>
<path fill="none" stroke="#f90" stroke-width="1.200" stroke-dasharray="5 3" d="M111 222.500Q126 218.500 141 222.500M112 370Q126 366 140 370"/>
</svg>
<div class="legend"><p>contour-1</p><p>Volume fraction (water)</p>
<div class="colormap d-flex"><ol class="d-flex flex-column justify-content-between"><li>4.7914e-05</li><li>4.3122e-05</li><li>3.8331e-05</li><li>3.3540e-05</li><li>2.8748e-05</li><li>2.3957e-05</li><li>1.9165e-05</li><li>1.4374e-05</li><li>9.5827e-06</li><li>4.7914e-06</li><li>0.0000e+00</li></ol>
<svg class="ramp" width="70" height="406" viewBox="0 0 70 406"><path fill="url(#heat)" stroke="#000" stroke-width="1.300" d="M7.500.500h62v405h-62z"/><path stroke="#222" stroke-width="1.300" d="M0 .5h7M0 41h7M0 81.500h7M0 122h7M0 162.500h7M0 203h7M0 243.500h7M0 284h7M0 324.500h7M0 365h7M0 405.500h7"/></svg></div>
</div>
</div>

<section class="win udflib" role="dialog" aria-label="UDF库管理器">
<header class="d-flex align-items-center"><svg class="i16 amber"><use href="#mark"/></svg>UDF库管理器<button class="ms-auto" aria-label="关闭窗口"><svg class="i12"><use href="#cross"/></svg></button></header>
<div class="body">
<div class="picks d-flex align-items-center"><label for="libs" class="me-auto"><span class="mn">UDF</span>库<span class="mn"> [0/0]</span></label><button class="sq" aria-label="列表"><svg class="i20"><use href="#lines3"/></svg></button><button class="sq" aria-label="全选"><svg class="i20"><use href="#linesok"/></svg></button><button class="sq" aria-label="取消全选"><svg class="i20"><use href="#linesno"/></svg></button></div>
<select multiple class="lst tall" id="libs"></select>
<div class="named d-flex align-items-center"><label for="ln1">库名称</label><input class="txt flex-grow-1" id="ln1"></div>
<hr>
<div class="foot d-flex justify-content-center"><button class="cmd prime">载荷</button><button class="cmd">卸载</button><button class="cmd">关闭</button><button class="cmd">帮助</button></div>
</div>
<svg class="corner" width="13" height="13"><path stroke="#999" d="M1 13L13 1M5 13l8-8M9 13l4-4"/></svg>
</section>

<section class="win udfbuild" role="dialog" aria-label="编译UDF">
<header class="d-flex align-items-center"><svg class="i16 amber"><use href="#mark"/></svg>编译UDF<button class="ms-auto" aria-label="关闭窗口"><svg class="i12"><use href="#cross"/></svg></button></header>
<div class="body">
<div class="pair d-flex">
<div class="flex-fill"><div class="picks d-flex align-items-center"><label for="src" class="me-auto">源文件</label><button class="sq" aria-label="全选"><svg class="i20"><use href="#linesok"/></svg></button><button class="sq" aria-label="取消全选"><svg class="i20"><use href="#linesno"/></svg></button></div><select multiple class="lst short" id="src"></select><div class="pair edit d-flex"><button class="cmd">添加...</button><button class="cmd slim">删除</button></div></div>
<div class="flex-fill"><div class="picks d-flex align-items-center"><label for="hdr" class="me-auto">头文件</label><button class="sq" aria-label="全选"><svg class="i20"><use href="#linesok"/></svg></button><button class="sq" aria-label="取消全选"><svg class="i20"><use href="#linesno"/></svg></button></div><select multiple class="lst short" id="hdr"></select><div class="pair edit d-flex"><button class="cmd">添加...</button><button class="cmd slim">删除</button></div></div>
</div>
<div class="build d-flex align-items-center"><label for="ln2">库名称</label><input class="txt flex-grow-1" id="ln2" value="libudf"><button class="cmd slim" disabled>构建</button><div class="opt d-flex align-items-center align-self-start"><input type="checkbox" class="boxed" id="cc"><label for="cc">使用内置编译器</label></div></div>
<hr>
<div class="foot d-flex justify-content-center"><button class="cmd prime">载荷</button><button class="cmd">取消</button><button class="cmd">帮助</button></div>
</div>
<svg class="corner" width="13" height="13"><path stroke="#999" d="M1 13L13 1M5 13l8-8M9 13l4-4"/></svg>
</section>
</div>
</main>

<div class="tools tools-r d-flex flex-column" role="toolbar">
<div class="grip"></div>
<button aria-label="镜像"><svg class="i24" viewBox="0 0 24 24"><ellipse cx="12" cy="6.500" rx="8.500" ry="4" fill="var(--gold)" stroke="#8a8a7a"/><path stroke="#777" stroke-width="1.300" d="M1 12.500h22"/><ellipse cx="12" cy="18" rx="8.500" ry="4" fill="url(#fade)"/></svg></button>
<button aria-label="阴影"><svg class="i24" viewBox="0 0 24 24"><path fill="#555" d="M12 12c3-4 8-5 10-3 1 3-3 8-10 11z"/><ellipse cx="8" cy="12" rx="5" ry="9" fill="var(--gold)" stroke="#777"/></svg></button>
<button aria-label="背景"><svg class="i24" viewBox="0 0 24 24"><path fill="none" stroke="#aaa" stroke-width=".8" stroke-dasharray="3 1" d="M0 6l6-6M0 12L12 0M0 18L18 0M0 24L24 0M6 24L24 6M12 24l12-12M18 24l6-6M6 0l18 18M0 6l18 18M0 15l9 9M15 0l9 9"/><ellipse cx="12" cy="12" rx="5" ry="9" fill="var(--gold)" stroke="#888"/></svg></button>
<div class="grip"></div>
<button aria-label="显示"><svg class="i20" viewBox="0 0 20 20"><path fill="none" stroke="#222" stroke-width="1.400" d="M2 11c4-6 12-6 16 0-4 6-12 6-16 0zM10 1v3.500M2.500 3l2 2.500M17.500 3l-2 2.500"/><circle cx="10" cy="11" r="2.500" fill="var(--gold)"/></svg></button>
<button aria-label="隐藏"><svg class="i20" viewBox="0 0 20 20"><path fill="none" stroke="#222" stroke-width="1.400" d="M2 11c4-6 12-6 16 0-4 6-12 6-16 0zM10 1v3.500M2.500 3l2 2.500M7 10c1-3 5-3 6 0"/><path stroke="var(--gold)" stroke-width="1.800" d="M4 17L17 4"/></svg></button>
<button aria-label="撤销"><svg class="i20" viewBox="0 0 20 20"><path fill="none" stroke="var(--gold)" stroke-width="1.500" stroke-dasharray="1.500 1.500" d="M2 7V2h17v15h-7"/><path fill="none" stroke="#222" stroke-width="1.600" d="M2 10c6-2 9 1 9 8"/><path fill="#222" d="M0 11l4-4 1 5z"/></svg></button>
<div class="grip"></div>
<button aria-label="坐标轴"><svg class="i20" viewBox="0 0 20 20"><path fill="none" stroke="#222" stroke-width="1.500" d="M3 3v13h13M3 16L13 8"/><path fill="var(--gold)" d="M.5 4L3 0l2.500 4zM15 13.500l4 2.500-4 2.500zM11 6l4-1-1 5z"/></svg></button>
<button aria-label="色条"><svg class="i24" viewBox="0 0 24 24"><rect x="1.500" y="9.500" width="21" height="5" rx="2.500" fill="#fff" stroke="#777"/><path fill="var(--gold)" d="M4 10h9v4H4q-2-2 0-4"/></svg></button>
<button aria-label="注释"><svg class="i20" viewBox="0 0 20 20"><path fill="none" stroke="#222" stroke-width="1.400" d="M2 2h12l4 4v12H2z"/><path stroke="var(--gold)" stroke-width="1.600" d="M5 6.500h8"/><path stroke="#222" stroke-width="1.400" d="M5 11h7M5 14h7"/></svg></button>
<button aria-label="切面"><svg class="i24" viewBox="0 0 24 24"><path fill="#8b8b8b" d="M3 5h5v13H3z"/><path fill="#f8ecd0" stroke="#d9a640" d="M7 6l3-1.500V16l-3 2zM3 5.500h5"/><path fill="none" stroke="#888" stroke-width="1.500" d="M14 9h8M14 14h8M16 7l-2.500 2L16 11M16 12l-2.500 2 2.500 2"/></svg></button>
<div class="grip"></div>
<button aria-label="复制"><svg class="i20" viewBox="0 0 20 20"><path fill="none" stroke="#111" stroke-width="2.500" d="M4 15V3.500h11"/><path fill="#fff" stroke="var(--gold)" stroke-width="1.400" d="M7 6h10v12H7z"/></svg></button>
<button aria-label="截图"><svg class="i20" viewBox="0 0 20 20"><path fill="none" stroke="var(--gold)" stroke-width="1.400" d="M1.500 4.500h5L8 2.500h4l1.500 2h5v12h-17z"/><circle cx="10" cy="10.500" r="3" fill="#111"/></svg></button>
</div>
</div>

<footer class="status d-flex align-items-center">
<div class="grip-v"></div>
<label for="pick" class="ms-auto">选择<span class="mn">0</span></label>
<select class="form-select" id="pick"><option>all</option></select>
</footer>
</div>
</div>
</div>
</div>
</body>
</html>
